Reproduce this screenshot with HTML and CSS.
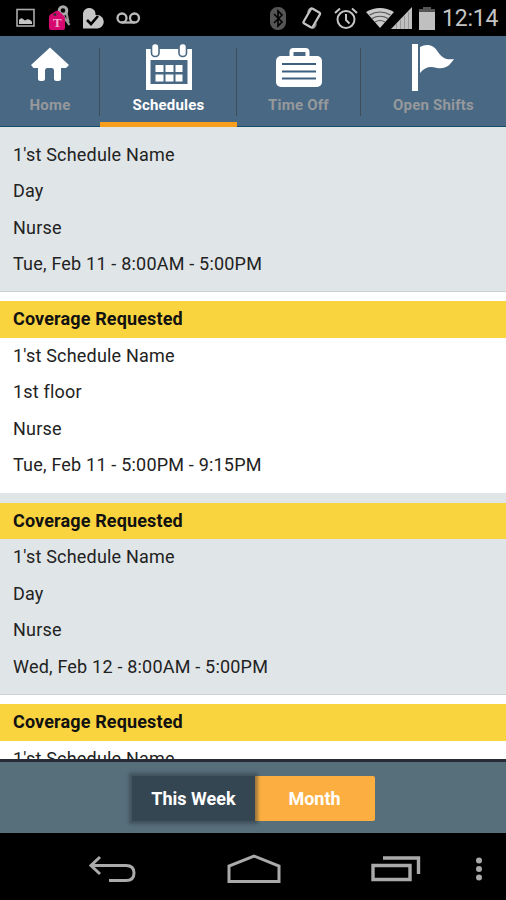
FILE: index.html
```html
<!DOCTYPE html>
<html lang="en">
<head>
	<meta charset="UTF-8">
	<meta name="viewport" content="width=device-width, initial-scale=1">
	<title>Schedules</title>
	<link rel="stylesheet" href="styles.css">
</head>
<body>
	<div class="screen">
		<div class="status">
			<div class="notifications">
				<svg width="20" height="20" viewBox="0 0 20 20">
					<rect x="1" y="1.5" width="17" height="16.5" fill="none" stroke="#aaa" stroke-width="1.6"/>
					<path d="M3 16v-4q2-3 4-1l2 1.500q3-2 4-1 3 1 3 2.500v2z" fill="#c4c4c4"/>
				</svg>
				<svg width="24" height="26" viewBox="0 0 24 26">
					<path d="M13 8l8.500 12M18 6l2.500 11" stroke="#999" stroke-width="2.2"/>
					<circle cx="15" cy="5.500" r="3.800" fill="none" stroke="#aaa" stroke-width="3"/>
					<path d="M1 12q0-2 2-3l5-3q2-1 4 1l4 4q1 1 1 3v9q0 2-2 2H3q-2 0-2-2z" fill="#d4086f"/>
					<circle cx="7" cy="9.500" r="1.500" fill="#333"/>
					<text class="tag-letter" x="5" y="22">T</text>
				</svg>
				<svg width="24" height="24" viewBox="0 0 24 24">
					<path d="M1 22.500V7.500a6.300 6.300 0 0 1 12.600 1.500h2.200a6.800 6.800 0 0 1 0 13.500z" fill="#c6c6c6"/>
					<path d="M5 14l4 4 7-8" fill="none" stroke="#000" stroke-width="2.6"/>
				</svg>
				<svg width="25" height="12" viewBox="0 0 25 12">
					<g fill="none" stroke="#bbb" stroke-width="2.3">
						<circle cx="6" cy="6" r="4.5"/>
						<circle cx="18.5" cy="6" r="4.5"/>
						<path d="M6 10.5h12.5"/>
					</g>
				</svg>
			</div>
			<div class="system">
				<svg class="bluetooth" width="16" height="23" viewBox="0 0 16 23">
					<rect width="16" height="23" rx="7.5" fill="#555"/>
					<path d="M4 7l8 8-4 4V4l4 4-8 8" fill="none" stroke="#000" stroke-width="1.6"/>
				</svg>
				<svg class="rotate" width="22" height="25" viewBox="0 0 22 25">
					<path d="M6 7q1-6 5-5l-1 2zM16 17q-1 6-5 6l1-3z" fill="#888"/>
					<rect x="5.500" y="3.500" width="10.500" height="17" rx="1.500" transform="rotate(30 10.700 12)" fill="#000" stroke="#c4c4c4" stroke-width="2.200"/>
				</svg>
				<svg class="alarm" width="24" height="23" viewBox="0 0 24 23">
					<g fill="none" stroke="#c4c4c4" stroke-width="2">
						<circle cx="12" cy="12.500" r="8.500"/>
						<path d="M12 7v6l3.500 3.500M1 6l5-4.500M18 1.500l5 4.500"/>
					</g>
				</svg>
				<svg class="wifi" width="28" height="22" viewBox="0 0 28 22">
					<path d="M0 5Q14-3 28 5L14 21z" fill="#c9c9c9"/>
					<path d="M3.500 8Q14 2 24.500 8M6 11.500Q14 7 22 11.500M9 15Q14 12 19 15" fill="none" stroke="#555" stroke-width="1.200"/>
				</svg>
				<svg class="signal" width="21" height="22" viewBox="0 0 21 22">
					<path d="M0 22L21 0v22z" fill="#c0c0c0"/>
					<path d="M5.500 17v5M9.500 13v9M13.500 9v13M17.500 5v17" stroke="#999" stroke-width="1"/>
				</svg>
				<svg class="battery" width="16" height="23" viewBox="0 0 16 23">
					<path d="M4 0h8v2h4v3H0V2h4z" fill="#555"/>
					<path d="M0 5h16v18H0z" fill="#c0c0c0"/>
				</svg>
				<span class="clock">12:14</span>
			</div>
		</div>

		<div class="tabs">
			<a class="tab home">
				<svg width="40" height="46" viewBox="0 0 40 46">
					<path d="M20 3.500L1 21l2.500 3H8v10.500q0 2.500 2.500 2.500h2q2.500 0 2.500-2.500V27q0-3 2.500-3h4q2.500 0 2.500 3v7.500q0 2.500 2.500 2.500h2q2.500 0 2.500-2.500V24h5l3-3z" fill="#fff"/>
				</svg>
				<span>Home</span>
			</a>
			<a class="tab schedules active">
				<svg width="48" height="48" viewBox="0 0 48 48">
					<path d="M1 5h46v41H1z" fill="#fff"/>
					<path d="M5.500 16h37v24h-37z" fill="#496883"/>
					<path d="M10.500 21h8v7h-8zM20.500 21h8v7h-8zM30.500 21h7v7h-7zM10.500 30.500h8v7h-8zM20.500 30.500h8v7h-8zM30.500 30.500h7v7h-7z" fill="#fff"/>
					<g fill="#fff" stroke="#496883" stroke-width="1.600">
						<rect x="6.500" y="-.5" width="7.500" height="13" rx="3.500"/>
						<rect x="34" y="-.5" width="7.500" height="13" rx="3.500"/>
					</g>
				</svg>
				<span>Schedules</span>
			</a>
			<a class="tab timeoff">
				<svg width="48" height="46" viewBox="0 0 48 46">
					<path d="M16.500 12V8q0-2 2-2h12q2 0 2 2v4" fill="none" stroke="#fff" stroke-width="4"/>
					<rect x="1" y="12" width="46" height="31" rx="5" fill="#fff"/>
					<path d="M7 20h34M7 27.500h34M7 34.500h34" stroke="#3d607e" stroke-width="2"/>
				</svg>
				<span>Time Off</span>
			</a>
			<a class="tab openshifts">
				<svg width="44" height="48" viewBox="0 0 44 48">
					<path d="M0 0h6v47H0z" fill="#fff"/>
					<path d="M8 3C15-1 22 1 26 8c5 7 9 8 16 7-5 8-10 10-17 9-7-2-12-1-17 5z" fill="#fff"/>
				</svg>
				<span>Open Shifts</span>
			</a>
		</div>

		<div class="list">
			<div class="shift gray">
				<p>1'st Schedule Name</p>
				<p>Day</p>
				<p>Nurse</p>
				<p class="time">Tue, Feb 11 - 8:00AM - 5:00PM</p>
			</div>
			<div class="shift">
				<h3>Coverage Requested</h3>
				<p>1'st Schedule Name</p>
				<p>1st floor</p>
				<p>Nurse</p>
				<p class="time">Tue, Feb 11 - 5:00PM - 9:15PM</p>
			</div>
			<div class="shift gray">
				<h3>Coverage Requested</h3>
				<p>1'st Schedule Name</p>
				<p>Day</p>
				<p>Nurse</p>
				<p class="time">Wed, Feb 12 - 8:00AM - 5:00PM</p>
			</div>
			<div class="shift">
				<h3>Coverage Requested</h3>
				<p>1'st Schedule Name</p>
			</div>
		</div>

		<div class="range">
			<button class="week">This Week</button>
			<button class="month">Month</button>
		</div>

		<div class="navbar">
			<svg class="back" width="48" height="28" viewBox="0 0 48 28">
				<path d="M11 2L2 10.500l9 8.500M2 10.500h35q8 0 8 7.500t-8 7.500H20" fill="none" stroke="#aaa" stroke-width="3"/>
			</svg>
			<svg class="homekey" width="54" height="30" viewBox="0 0 54 30">
				<path d="M2 27.500V12L27 2l25 10v15.500z" fill="none" stroke="#aaa" stroke-width="3"/>
			</svg>
			<svg class="recent" width="50" height="26" viewBox="0 0 50 26">
				<path d="M2 9.500h37v14H2zM12 2h35.500v16" fill="none" stroke="#aaa" stroke-width="3.400"/>
			</svg>
			<svg class="more" width="8" height="24" viewBox="0 0 8 24">
				<g fill="#aaa">
					<circle cx="4" cy="3.500" r="3"/>
					<circle cx="4" cy="12" r="3"/>
					<circle cx="4" cy="20.500" r="3"/>
				</g>
			</svg>
		</div>
	</div>
</body>
</html>
```
FILE: styles.css
```css
* {
	margin: 0;
	padding: 0;
	box-sizing: border-box;
}
body {
	font-family: Roboto, "Liberation Sans", sans-serif;
	background: #000;
}
svg {
	display: block;
	flex: none;
}
.screen {
	width: 506px;
	height: 900px;
	display: flex;
	flex-direction: column;
	overflow: hidden;
}

/* status bar */
.status {
	flex: none;
	height: 36px;
	padding: 0 8px 0 16px;
	display: flex;
	justify-content: space-between;
	align-items: center;
	background: #000;
}
.notifications, .system {
	display: flex;
	align-items: center;
}
.notifications {
	gap: 10px;
}
.notifications svg:nth-child(2) {
	margin-left: 2px;
}
.tag-letter {
	font-family: "Liberation Serif", serif;
	font-size: 13px;
	font-weight: bold;
	fill: #f5a8cc;
}
.rotate {
	margin-left: 15px;
}
.alarm {
	margin-left: 11px;
}
.wifi {
	margin-left: 8px;
}
.signal {
	margin-left: -3px;
}
.battery {
	margin-left: 7px;
}
.clock {
	width: 56px;
	height: 36px;
	margin-left: 7px;
	font-size: 23px;
	line-height: 38px;
	letter-spacing: -0.2px;
	color: #c4c4c4;
	white-space: nowrap;
}

/* tabs */
.tabs {
	flex: none;
	height: 91px;
	display: flex;
	background: #496883;
}
.tab {
	height: 91px;
	padding-top: 8px;
	display: flex;
	flex-direction: column;
	align-items: center;
	justify-content: space-between;
	padding-bottom: 12px;
	border-bottom: 1px solid #174a68;
	font-size: 15px;
	font-weight: bold;
	line-height: 18px;
	letter-spacing: 0.2px;
	color: #96999c;
	background: linear-gradient(#3c4d5c, #3c4d5c) right 12px / 1px 68px no-repeat;
}
.home {
	width: 100px;
}
.schedules {
	width: 137px;
}
.timeoff {
	width: 124px;
	padding-right: 1px;
}
.openshifts {
	width: 145px;
	background: none;
}
.active {
	color: #fff;
	border-bottom: 5px solid #f99d1c;
	padding-bottom: 8px;
}

/* shift list */
.list {
	flex: 1;
	overflow: hidden;
	background: #fff;
}
.shift {
	padding: 9.5px 0 8.5px;
	border-bottom: 1px solid #fff;
	color: #222;
}
.gray {
	background: #e0e5e8;
	border-bottom-color: #cdd1d4;
}
.gray:first-child {
	padding-bottom: 8px;
}
.shift h3, .shift p {
	height: 36.5px;
	padding-left: 13px;
	font-size: 18px;
	line-height: 36.5px;
	white-space: nowrap;
}
.shift h3 {
	background: #f9d43e;
	color: #111;
	letter-spacing: 0.14px;
	line-height: 35.5px;
}
.shift p {
	letter-spacing: 0.2px;
}

/* this week / month switch */
.range {
	flex: none;
	height: 74px;
	padding-top: 14px;
	display: flex;
	justify-content: center;
	align-items: flex-start;
	background: #576e7b;
	border-top: 3px solid #262b35;
}
.range button {
	height: 45px;
	border: 0;
	font-family: inherit;
	font-size: 18px;
	font-weight: bold;
	color: #fff;
}
.range .week {
	position: relative;
	width: 123px;
	padding-left: 1px;
	background: #344651;
	box-shadow: 0 0 3px 3px rgba(40, 50, 58, 0.45);
}
.range .month {
	width: 120px;
	background: #fcaf40;
	border-radius: 0 2px 2px 0;
}

/* device keys */
.navbar {
	flex: none;
	height: 67px;
	padding: 4px 23px 0 89px;
	display: flex;
	align-items: center;
	background: #000;
}
.homekey {
	margin-left: 90px;
}
.recent {
	margin-left: 90px;
}
.more {
	margin-left: 54px;
}
```
